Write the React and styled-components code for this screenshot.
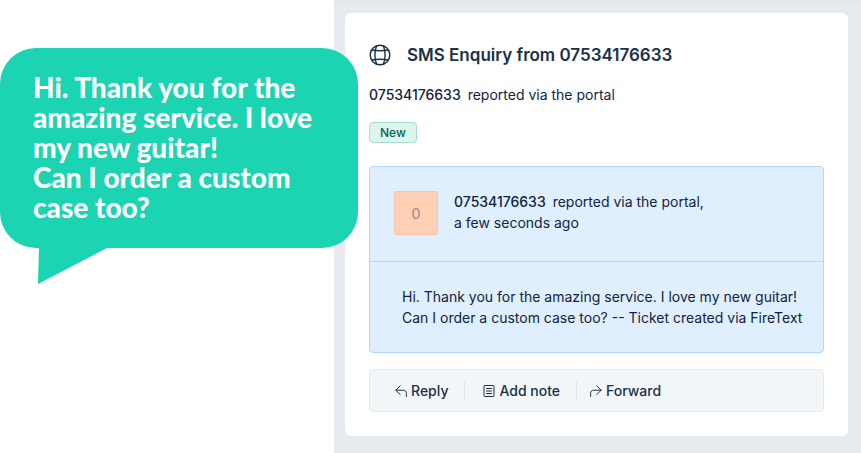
import React from "react";
import styled, { createGlobalStyle } from "styled-components";

const GlobalStyle = createGlobalStyle`
  *, *::before, *::after {
    box-sizing: border-box;
  }
  body {
    margin: 0;
    background: #fff;
    font-family: Inter, "Liberation Sans", sans-serif;
    font-size: 14px;
    line-height: 21px;
    color: #12233f;
  }
`;

const Page = styled.div`
  display: flex;
  align-items: flex-start;
  min-height: 100vh;
`;

const Bubble = styled.aside`
  position: relative;
  z-index: 1;
  flex: 0 0 358px;
  margin: 48px -24px 0 0;
  padding: 24px 33px 26px;
  border-radius: 36px;
  background: #1cd3b2;
`;

const BubbleText = styled.p`
  margin: 0;
  font-family: Lato, "Open Sans", sans-serif;
  font-size: 28px;
  font-weight: 900;
  line-height: 30px;
  color: #fff;
  white-space: pre-line;
`;

const Tail = styled.svg`
  position: absolute;
  top: 100%;
  left: 38px;
  display: block;
  margin-top: -1px;
  fill: #1cd3b2;
`;

const Panel = styled.main`
  flex: 1;
  align-self: stretch;
  min-width: 0;
  padding: 13px 13px 17px 11px;
  background: linear-gradient(#e2e5ea, #e7ebf0 5px);
`;

const Card = styled.article`
  padding: 28px 24px 24px;
  border-radius: 6px;
  background: #fff;
`;

const Header = styled.header`
  display: flex;
  align-items: center;
  gap: 16px;
`;

const Title = styled.h1`
  margin: 0;
  font-size: 17px;
  font-weight: 600;
  line-height: 28px;
  color: #183247;
`;

const Meta = styled.p`
  margin: ${(p) => (p.$spaced ? "15px 0 17px" : "0")};
`;

const Sender = styled.strong`
  margin-right: 7px;
  font-weight: 500;
`;

const Badge = styled.span`
  display: block;
  width: fit-content;
  padding: 0 10px;
  border: 1px solid #a5dfd1;
  border-radius: 4px;
  background: #def4ef;
  font-size: 12px;
  font-weight: 500;
  line-height: 19px;
  color: #04664b;
`;

const Message = styled.section`
  margin: 23px 0 16px;
  border: 1px solid #b3d6fb;
  border-radius: 4px;
  background: #e0effd;
`;

const MessageHead = styled.div`
  display: flex;
  gap: 16px;
  padding: 24px 24px 26px;
  border-bottom: 1px solid #b3d6fb;
`;

const Avatar = styled.div`
  flex: none;
  width: 44px;
  height: 44px;
  border: 1px solid #f7c6a8;
  border-radius: 2px;
  background: #ffd0b5;
  font-weight: 500;
  line-height: 44px;
  text-align: center;
  color: #b08d80;
`;

const MessageBody = styled.p`
  margin: 0;
  padding: 24px 16px 24px 32px;
`;

const Toolbar = styled.div`
  display: flex;
  align-items: center;
  padding: 10px 9px;
  border: 1px solid #e5e9ee;
  border-radius: 4px;
  background: #f3f6f9;
`;

const Action = styled.button`
  display: flex;
  align-items: center;
  gap: 4px;
  padding: 0 16px;
  border: 0;
  background: none;
  font: inherit;
  font-weight: 500;
  color: #183247;
  cursor: pointer;

  & + & {
    padding-left: 18px;
    border-left: 1px solid #e2e7ec;
  }

  & + &:last-child {
    padding-left: 13px;
  }
`;

const Icon = styled.svg`
  flex: none;
  fill: none;
  stroke: #183247;
  stroke-width: ${(p) => p.$weight || 1};
  stroke-linecap: round;
  stroke-linejoin: round;
`;

function GlobeIcon() {
  return (
    <Icon width="22" height="22" viewBox="0 0 22 22" $weight={1.4} aria-hidden="true">
      <circle cx="11" cy="11" r="9.8" />
      <path d="M7.6 1.9C6.3 4.6 5.9 7.6 5.9 11s.4 6.4 1.7 9.1M14.4 1.9c1.3 2.7 1.7 5.7 1.7 9.1s-.4 6.4-1.7 9.1" />
      <path d="M2.4 6c5.6.9 11.6.9 17.2 0M2.4 16c5.6-.9 11.6-.9 17.2 0" />
    </Icon>
  );
}

function ReplyIcon() {
  return (
    <Icon width="12" height="12" viewBox="0 0 12 12" aria-hidden="true">
      <path d="M5.2.8.8 5.2l4.4 4.2M.8 5.2h7.4c2 0 3.2 1.2 3.2 3.2v3" />
    </Icon>
  );
}

function NoteIcon() {
  return (
    <Icon width="12" height="12" viewBox="0 0 12 12" aria-hidden="true">
      <rect x="1" y=".5" width="10" height="11" rx="1" />
      <path d="M3.5 3.5h5M3.5 6h5M3.5 8.5h5" />
    </Icon>
  );
}

function ForwardIcon() {
  return (
    <Icon width="12" height="12" viewBox="0 0 12 12" aria-hidden="true">
      <path d="m6.8.8 4.4 4.4-4.4 4.2M11.2 5.2H3.8c-2 0-3.2 1.2-3.2 3.2v3" />
    </Icon>
  );
}

const PHONE = "07534176633";

function App() {
  return (
    <>
      <GlobalStyle />
      <Page>
        <Bubble>
          <BubbleText>
            {"Hi. Thank you for the amazing service. I love my new guitar!\nCan I order a custom case too?"}
          </BubbleText>
          <Tail width="70" height="37" viewBox="0 0 70 37" aria-hidden="true">
            <path d="M1 0h70L0 37z" />
          </Tail>
        </Bubble>
        <Panel>
          <Card>
            <Header>
              <GlobeIcon />
              <Title>SMS Enquiry from {PHONE}</Title>
            </Header>
            <Meta $spaced>
              <Sender>{PHONE}</Sender>reported via the portal
            </Meta>
            <Badge>New</Badge>
            <Message>
              <MessageHead>
                <Avatar>0</Avatar>
                <Meta>
                  <Sender>{PHONE}</Sender>reported via the portal,
                  <br />a few seconds ago
                </Meta>
              </MessageHead>
              <MessageBody>
                Hi. Thank you for the amazing service. I love my new guitar!
                <br />
                Can I order a custom case too? -- Ticket created via FireText
              </MessageBody>
            </Message>
            <Toolbar>
              <Action type="button"><ReplyIcon />Reply</Action>
              <Action type="button"><NoteIcon />Add note</Action>
              <Action type="button"><ForwardIcon />Forward</Action>
            </Toolbar>
          </Card>
        </Panel>
      </Page>
    </>
  );
}

export default App;
